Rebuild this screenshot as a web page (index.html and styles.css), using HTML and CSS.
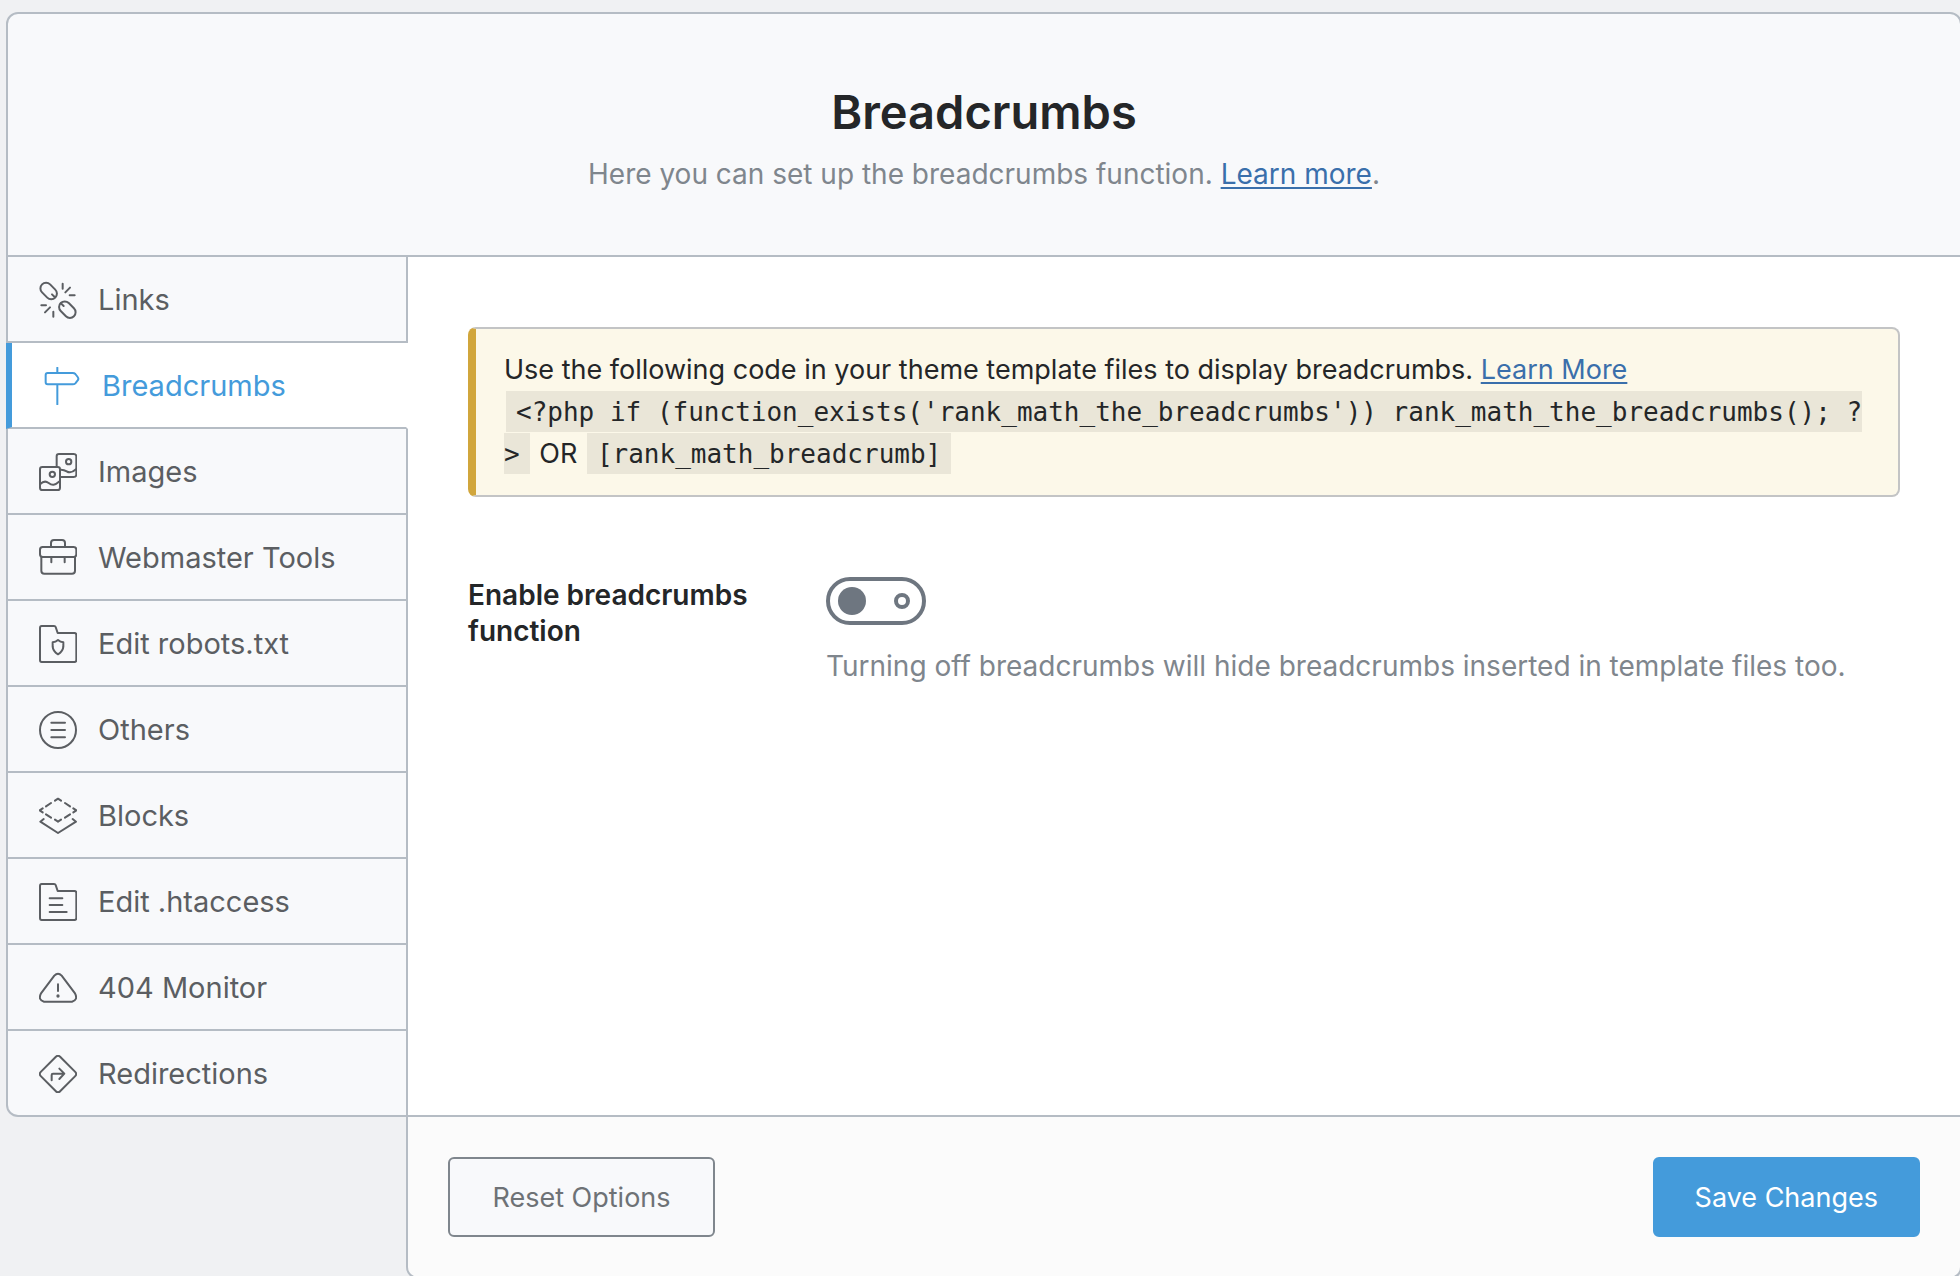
FILE: index.html
```
<!DOCTYPE html>
<html lang="en">
<head>
<meta charset="utf-8">
<meta name="viewport" content="width=device-width, initial-scale=1">
<title>Breadcrumbs</title>
<link rel="stylesheet" href="styles.css">
</head>
<body>
<main class="panel">
  <header class="panel-header">
    <h1 class="panel-title">Breadcrumbs</h1>
    <p class="panel-desc">Here you can set up the breadcrumbs function. <a class="link" href="#learn">Learn more</a>.</p>
  </header>

  <nav class="tabs" aria-label="General settings">
    <a class="tab" href="#links">
      <svg class="icon" viewBox="0 0 114 114" aria-hidden="true">
        <rect x="-28" y="-17" width="56" height="34" rx="17" transform="translate(29 30) rotate(45)"/>
        <rect x="-28" y="-17" width="56" height="34" rx="17" transform="translate(85 86) rotate(45)"/>
        <path d="M39 40l8 8M66 67l8 8M71 8v15M93 20L79 34M92 43h15M7 73h14M33 79L18 94M43 92v15"/>
      </svg>
      Links</a>
    <a class="tab tab-active" href="#breadcrumbs" aria-current="page">
      <svg class="icon" viewBox="0 0 114 114" aria-hidden="true">
        <path d="M43 2v15M43 53v59M14 18h75q5 0 8 3l7 9q4 5 0 10l-7 9q-3 3-8 3H14q-6 0-6-6V24q0-6 6-6z"/>
      </svg>
      Breadcrumbs</a>
    <a class="tab" href="#images">
      <svg class="icon" viewBox="0 0 114 114" aria-hidden="true">
        <rect x="3" y="42" width="60" height="69" rx="7"/>
        <path d="M53 38V10q0-7 7-7h44q8 0 8 7v55q0 7-8 7H67"/>
        <circle cx="40" cy="64" r="8"/>
        <circle cx="89" cy="26" r="8"/>
        <path d="M4 93c10-10 17-9 25-3 10 8 18 8 33-5M66 50c7 0 11 1 17 5 9 6 17 4 28-6"/>
      </svg>
      Images</a>
    <a class="tab" href="#webmaster">
      <svg class="icon" viewBox="0 0 114 114" aria-hidden="true">
        <rect x="3" y="24" width="109" height="30" rx="8"/>
        <path d="M7 55v40q0 9 9 9h83q9 0 9-9V55M36 23V12q0-9 9-9h24q9 0 9 9v11M37 55v15M77 55v15"/>
      </svg>
      Webmaster Tools</a>
    <a class="tab" href="#robots">
      <svg class="icon" viewBox="0 0 114 114" aria-hidden="true">
        <path d="M8 3h37q4 0 5 3l6 18h50q6 0 6 6v75q0 6-6 6H8q-5 0-5-6V9q0-6 5-6z"/>
        <path d="M57 45q7 6 16 7v13q-1 14-16 23-15-9-16-23V52q9-1 16-7z"/>
      </svg>
      Edit robots.txt</a>
    <a class="tab" href="#others">
      <svg class="icon" viewBox="0 0 114 114" aria-hidden="true">
        <circle cx="57" cy="57" r="54"/>
        <path d="M37 35h41M37 57h41M37 79h41"/>
      </svg>
      Others</a>
    <a class="tab" href="#blocks">
      <svg class="icon" viewBox="0 0 114 114" aria-hidden="true">
        <path d="M48 11l9-6 9 6M78 18l15 10M103 34l9 6-9 6M93 52L78 62M66 68l-9 6-9-6M36 62L21 52M11 46l-9-6 9-6M21 28l15-10M14 66L4 74l53 34 54-34-10-8"/>
      </svg>
      Blocks</a>
    <a class="tab" href="#htaccess">
      <svg class="icon" viewBox="0 0 114 114" aria-hidden="true">
        <path d="M8 3h37q4 0 5 3l6 18h50q6 0 6 6v75q0 6-6 6H8q-5 0-5-6V9q0-6 5-6z"/>
        <path d="M32 46h38M32 66h38M32 87h51"/>
      </svg>
      Edit .htaccess</a>
    <a class="tab" href="#monitor">
      <svg class="icon" viewBox="0 0 114 114" aria-hidden="true">
        <path d="M46 20q11-12 22 0l40 53q10 20-9 25H15Q-4 93 6 73z"/>
        <path d="M57 46v20"/>
        <circle class="dot" cx="57" cy="81" r="5"/>
      </svg>
      404 Monitor</a>
    <a class="tab tab-last" href="#redirections">
      <svg class="icon" viewBox="0 0 114 114" aria-hidden="true">
        <rect x="-41" y="-41" width="82" height="82" rx="9" transform="translate(57 57) rotate(45)"/>
        <path d="M38 76V60q0-4 4-4h33M61 41l15 15-15 16"/>
      </svg>
      Redirections</a>
  </nav>

  <section class="content">
    <div class="notice">
      Use the following code in your theme template files to display breadcrumbs. <a class="link" href="#docs">Learn More</a><br>
      <code class="code">&lt;?php if (function_exists('rank_math_the_breadcrumbs')) rank_math_the_breadcrumbs(); ?&gt;</code> OR <code class="code">[rank_math_breadcrumb]</code>
    </div>
    <div class="field">
      <label class="field-label" for="enable">Enable breadcrumbs function</label>
      <div class="field-body">
        <input class="toggle" type="checkbox" role="switch" id="enable" aria-describedby="enable-help">
        <p class="field-help" id="enable-help">Turning off breadcrumbs will hide breadcrumbs inserted in template files too.</p>
      </div>
    </div>
  </section>

  <footer class="actions">
    <button class="button" type="reset">Reset Options</button>
    <button class="button button-primary" type="submit">Save Changes</button>
  </footer>
</main>
</body>
</html>
```
FILE: styles.css
```
:root {
  --line: #b5bcc4;
  --blue: #449bdb;
  --panel: #f8f9fb;
}

* {
  box-sizing: border-box;
}

body {
  margin: 0;
  padding: 12px 0 0 6px;
  overflow-x: hidden;
  background: #f0f1f3;
  color: #242628;
  font: 28px/42px Inter, "Liberation Sans", sans-serif;
}

.panel {
  display: grid;
  grid-template-columns: 402px minmax(0, 1fr);
  margin-right: -2px;
}

.link {
  color: #3a6fab;
  text-decoration: underline;
  text-decoration-thickness: 2px;
  text-underline-offset: 3px;
}

/* Header */

.panel-header {
  grid-column: 1 / -1;
  padding: 70px 40px 60px;
  border: 2px solid var(--line);
  border-radius: 12px 12px 0 0;
  background: var(--panel);
  text-align: center;
}

.panel-title {
  margin: 0 0 13px;
  font-size: 47px;
  font-weight: 600;
  line-height: 56px;
}

.panel-desc {
  margin: 0;
  color: #7f868d;
}

/* Side tabs */

.tabs {
  display: flex;
  flex-direction: column;
}

.tab {
  display: flex;
  align-items: center;
  gap: 21px;
  height: 86px;
  padding: 2px 20px 0 31px;
  border: solid var(--line);
  border-width: 0 2px 2px;
  background: var(--panel);
  color: #5b5e62;
  font-size: 29px;
  text-decoration: none;
}

.tab-active {
  border-left: 6px solid var(--blue);
  border-right-color: #fff;
  background: #fff;
  color: var(--blue);
}

.tab-last {
  border-bottom-left-radius: 12px;
}

.icon {
  flex: none;
  width: 38px;
  height: 38px;
  fill: none;
  stroke: currentColor;
  stroke-width: 6;
  stroke-linecap: round;
  stroke-linejoin: round;
}

.icon .dot {
  fill: currentColor;
  stroke: none;
}

/* Settings */

.content {
  padding: 70px 60px;
  border: solid var(--line);
  border-width: 0 2px 2px 0;
  background: #fff;
}

.notice {
  margin-bottom: 80px;
  padding: 20px 28px;
  border: 2px solid #c3c4c5;
  border-left: 8px solid #d1a63c;
  border-radius: 8px;
  background: #fcf8e9;
  font-size: 27px;
}

.code {
  margin: 0 2px;
  padding: 6px 10px 5px;
  background: rgba(0, 0, 0, 0.07);
  font: 26px "DejaVu Sans Mono", monospace;
}

.field {
  display: grid;
  grid-template-columns: 1fr 3fr;
}

.field-label {
  padding-right: 40px;
  font-weight: 600;
  line-height: 36px;
}

.toggle {
  display: flex;
  align-items: center;
  justify-content: space-between;
  width: 100px;
  height: 48px;
  margin: 0;
  padding: 0 12px 0 8px;
  border: 4px solid #6e7680;
  border-radius: 24px;
  background: #fff;
  appearance: none;
}

.toggle::before {
  width: 28px;
  height: 28px;
  border-radius: 50%;
  background: #6e7680;
  content: "";
}

.toggle::after {
  box-sizing: border-box;
  width: 16px;
  height: 16px;
  border: 4px solid #6e7680;
  border-radius: 50%;
  content: "";
}

.field-help {
  margin: 20px 0 0;
  color: #7f868d;
}

/* Footer */

.actions {
  display: flex;
  grid-column: 2;
  justify-content: space-between;
  margin-left: -2px;
  padding: 40px;
  border: solid var(--line);
  border-width: 0 2px 2px;
  border-radius: 0 0 12px 12px;
  background: #fbfbfb;
}

.button {
  min-width: 267px;
  height: 80px;
  padding: 0 40px;
  border: 2px solid #7f868d;
  border-radius: 6px;
  background: var(--panel);
  color: #6e7276;
  font: 27px Inter, "Liberation Sans", sans-serif;
}

.button-primary {
  border-color: var(--blue);
  background: var(--blue);
  color: #fff;
}
```
